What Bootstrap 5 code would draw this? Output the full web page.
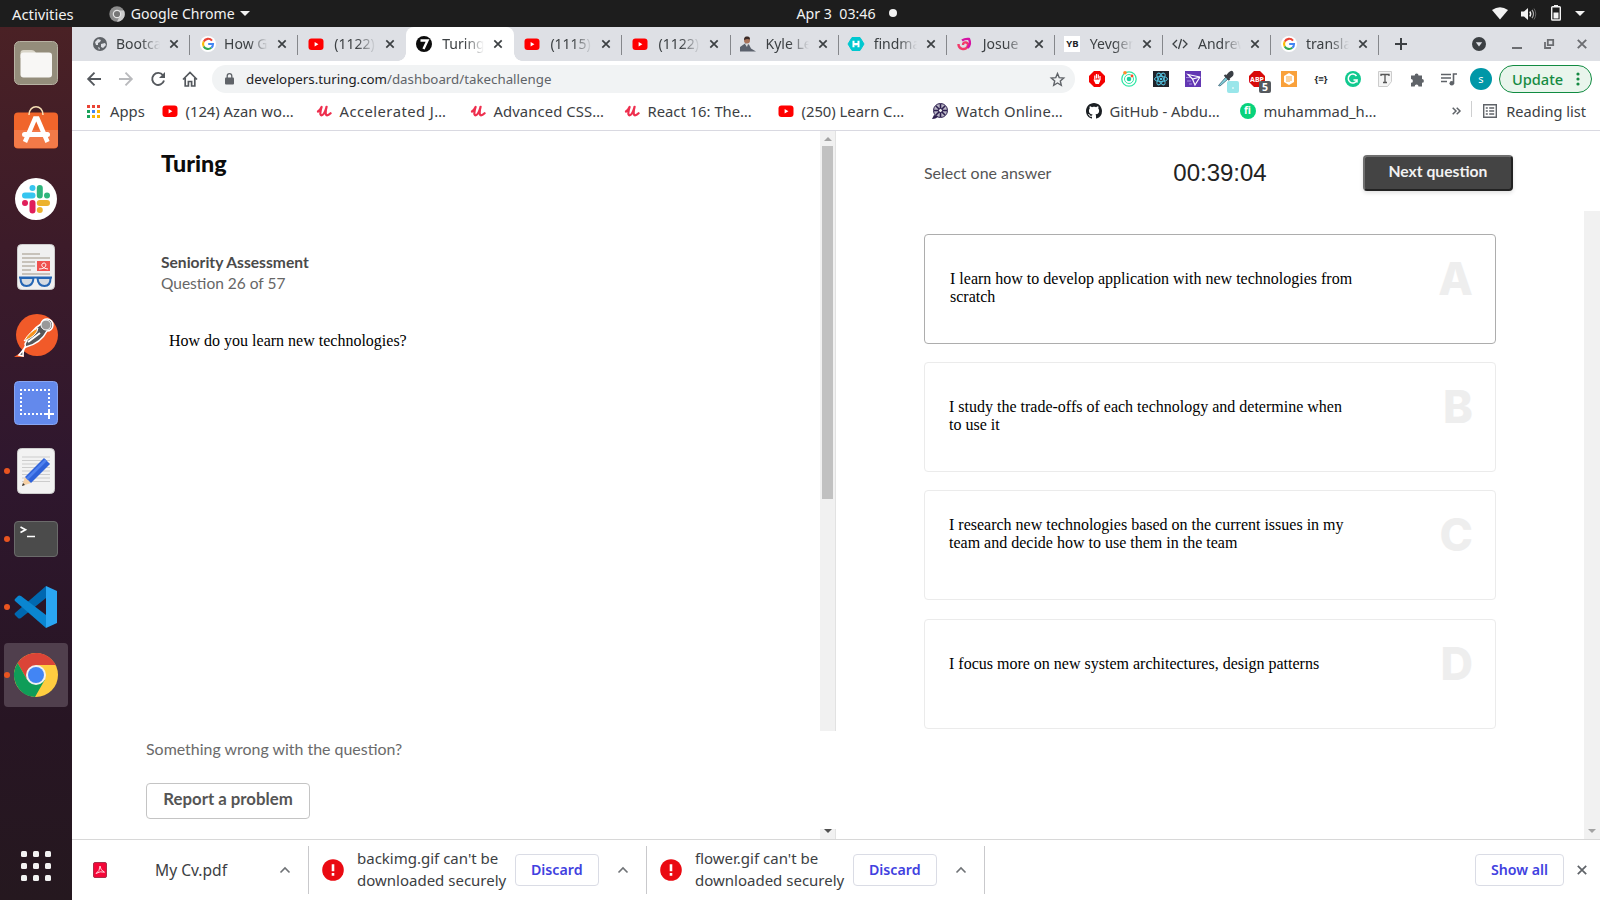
<!DOCTYPE html>
<html lang="en">
<head>
<meta charset="utf-8">
<title>Turing</title>
<link href="https://cdn.jsdelivr.net/npm/bootstrap@5.3.0/dist/css/bootstrap.min.css" rel="stylesheet">
<style>
  body { height: 900px; overflow: hidden; font-family: "Noto Sans", "Open Sans", sans-serif; font-size: 14.8px; line-height: 20px; color: #3c4043; background: #fff; }
  svg { display: block; flex: none; overflow: visible; }
  .sysbar { height: 27px; background: #1d1d1d; color: #f2f2f2; line-height: 26px; }
  .sysbar .side { flex: 1 1 0; }
  .dock { width: 72px; background: linear-gradient(#4a2125 0, #3c1b29 25%, #2f172e 50%, #271523 80%, #25181f 100%); padding-top: 2px; }
  .dock-item { height: 68px; position: relative; margin-bottom: 0; }
  .dock-item.running::before { content: ""; position: absolute; left: 4px; top: 31px; width: 6px; height: 6px; border-radius: 50%; background: #e95420; z-index: 1; }
  .dock-item.current > span { position: absolute; inset: 2px 4px; border-radius: 4px; background: #503f4d; }
  .dock-item svg { position: relative; }
  .tabstrip { height: 34px; background: #dee0e5; padding-left: 10px; }
  .tab-cell { width: 108.1px; height: 34px; padding-left: 9.5px; padding-bottom: 1px; position: relative; }
  .tab-cell.sep::after { content: ""; position: absolute; right: 0; top: 8px; height: 20px; width: 1px; background: #85878b; }
  .tab-cell .fav { width: 16px; margin-right: 8.5px; }
  .tab-title { width: 45px; overflow: hidden; white-space: nowrap; font-size: 14px; -webkit-mask-image: linear-gradient(90deg, #000 55%, transparent 98%); mask-image: linear-gradient(90deg, #000 55%, transparent 98%); }
  .tab-title.inset { padding-left: 2px; }
  .tab-cell .x { margin-left: 8px; }
  .tab-cell.live { background: #fff; border-radius: 8px 8px 0 0; }
  .tab-cell.live::before, .tab-cell.live i { content: ""; position: absolute; bottom: 0; width: 8px; height: 8px; }
  .tab-cell.live::before { left: -8px; background: radial-gradient(circle at 0 0, transparent 7.5px, #fff 8px); }
  .tab-cell.live i { right: -8px; background: radial-gradient(circle at 100% 0, transparent 7.5px, #fff 8px); }
  .toolbar { height: 36px; padding-left: 6px; }
  .slot { width: 32px; height: 28px; flex: none; }
  .omnibox { width: 863px; height: 28px; border-radius: 14px; background: #f1f3f4; margin-left: 6px; padding: 0 10px 0 13px; font-size: 13.3px; color: #5f6368; }
  .omnibox b { font-weight: 400; color: #202124; }
  .avatar { width: 22px; height: 22px; border-radius: 50%; background: #0097a7; color: #fff; font-size: 11px; line-height: 21px; }
  .update { width: 93px; height: 28px; border: 1px solid #118b41; border-radius: 14px; background: #e9f5ec; color: #158a42; font-weight: 500; font-size: 14.6px; padding: 0 11px 1px 12px; }
  .bookmarks { height: 34px; border-bottom: 1px solid #d9d9e1; padding: 0 14px 5px 15px; }
  .bm { width: 154px; white-space: nowrap; }
  .bm svg, .bm .ico { margin-right: 8px; }
  .page { height: 708px; }
  .geo { font-family: Lato, sans-serif; }
  .serif { font-family: "Liberation Serif", serif; font-size: 16px; line-height: 18px; color: #000; }
  .left-pane { width: 748px; }
  .sb { width: 16px; background: #f1f1f1; border-right: 1px solid #e2e2e2; }
  .sb-main { height: 600px; }
  .sb-thumb { width: 11px; height: 353px; background: #c1c1c1; }
  .brand { font-family: Lato, sans-serif; font-weight: 900; font-size: 23.3px; line-height: 28px; color: #0c0c0c; padding: 18px 0 0 89px; }
  .meta { padding: 75px 0 0 89px; font-size: 15.5px; line-height: 21px; color: #666; }
  .meta strong { font-weight: 700; color: #4a4a4a; font-size: 15.6px; }
  .report { width: 164px; height: 36px; border: 1px solid #c4c4c4; border-radius: 4px; font-weight: 700; font-size: 16.8px; line-height: 29px; color: #555; }
  .answers-head { height: 80px; padding: 24px 87px 0 88px; }
  .timer { font: 24px/36px "Liberation Sans", sans-serif; color: #222; }
  .next { width: 150px; height: 36px; border: 2px solid; border-color: #6f6f6f #222 #222 #6f6f6f; border-radius: 4px; background: #444; color: #f2f2f2; font-weight: 700; font-size: 15.7px; line-height: 29px; box-shadow: 0 2px 4px rgba(0,0,0,.12); }
  .answers { padding: 23px 0 0 88px; width: 748px; }
  .answer { width: 572px; height: 110px; border: 1px solid #ebebeb; border-radius: 4px; margin-bottom: 18px; padding: 0 22px 0 24px; }
  .answer:nth-child(3) { margin-bottom: 19px; }
  .answer.chosen { border-color: #adadad; padding-left: 25px; }
  .answer p { width: 403px; margin: 0; }
  .answer .key { font: 800 45px/54px Inter, sans-serif; color: #eee; margin-top: 17px; }
  .shelf { height: 60px; border-top: 1px solid #d8d8d8; font-size: 15px; line-height: 22px; }
  .dl { height: 48px; border-right: 1px solid #c9c9cc; }
  .dl-text { margin: 0 0 2px 13px; white-space: nowrap; }
  .shelf-btn { height: 32px; border: 1px solid #dadce5; border-radius: 4px; color: #4141e0; font-weight: 600; font-size: 14.2px; line-height: 29px; text-align: center; }
</style>
</head>
<body class="d-flex flex-column">

<svg width="0" height="0" class="position-absolute">
  <symbol id="yt" viewBox="0 0 16 16"><rect x=".5" y="2.5" width="15" height="11.5" rx="3" fill="#f00"/><path d="M6.600 6v4.600l3.800-2.300z" fill="#fff"/></symbol>
  <symbol id="goog" viewBox="0 0 16 16"><circle cx="8" cy="8" r="8" fill="#fff"/><g fill="none" stroke-width="2.100"><path d="M12 4.600A5 5 0 0 0 3.700 5.600" stroke="#ea4335"/><path d="M3.700 5.600a5 5 0 0 0 0 4.800" stroke="#fbbc05"/><path d="M3.700 10.400a5 5 0 0 0 7.600 1.400" stroke="#34a853"/><path d="M11.300 11.800A5 5 0 0 0 13 8H8.200" stroke="#4285f4"/></g></symbol>
  <symbol id="x" viewBox="0 0 10 10"><path d="M1.300 1.300l7.400 7.400M8.700 1.300L1.300 8.700" stroke="#3c4043" stroke-width="1.700"/></symbol>
  <symbol id="udemy" viewBox="0 0 16 16"><path d="M2 8.500C4 7 5 5.500 5.600 4 4.500 7.500 3.500 12.300 5.500 12.300 7.700 12.300 9.400 8 10.600 3.800 9.600 7.500 9 12.300 11 12.300 12.500 12.300 13.500 11.300 14.600 10.200" fill="none" stroke="#ee2f4e" stroke-width="2.200" stroke-linecap="round" stroke-linejoin="round"/></symbol>
  <symbol id="up" viewBox="0 0 12 8"><path d="M1.500 6.500L6 2l4.500 4.500" fill="none" stroke="#6f7276" stroke-width="1.600"/></symbol>
  <symbol id="warn" viewBox="0 0 22 22"><circle cx="11" cy="11" r="10.800" fill="#ea0a12"/><path d="M11 5.300v7M11 14v2.800" stroke="#fff" stroke-width="2.600"/></symbol>
</svg>

<header class="sysbar d-flex">
  <div class="side d-flex align-items-center ps-2 ms-1">
    <span>Activities</span>
    <svg style="margin-left:35px" width="16" height="16" viewBox="0 0 16 16"><circle cx="8" cy="8" r="7.700" fill="#8d8d8d"/><path d="M8 4.600H15A7.700 7.700 0 0 1 8 15.700L11 9.500" fill="#ccc"/><circle cx="8" cy="8" r="3.700" fill="#777" stroke="#e6e6e6" stroke-width="1.200"/></svg>
    <span style="font-size:14.100px;margin-left:6px">Google Chrome</span>
    <svg style="margin-left:5px" width="10" height="5"><path d="M0 0h10L5 5z" fill="#f2f2f2"/></svg>
  </div>
  <div class="d-flex align-items-center" style="font-size:14.200px"><span style="white-space:pre;margin-left:101px">Apr 3  03:46</span><svg width="9" height="9" class="me-1" style="margin-left:13px"><circle cx="4" cy="4" r="4" fill="#f2f2f2"/></svg></div>
  <div class="side d-flex align-items-center justify-content-end" style="padding-right:15px">
    <svg width="16" height="13" viewBox="0 0 16 13"><path d="M0 3Q8-2.500 16 3L8 12.500z" fill="#f2f2f2"/></svg>
    <svg style="margin-left:13px" width="16" height="14" viewBox="0 0 16 14"><path d="M0 4.500h3L7 1v12L3 9.500H0z" fill="#f2f2f2"/><path d="M8.800 4.500q1.800 2.500 0 5" stroke="#f2f2f2" fill="none" stroke-width="1.400"/><path d="M11 2.800q3 4.200 0 8.400" stroke="#aaa" fill="none" stroke-width="1.200"/><path d="M13 1.500q3.500 5.500 0 11" stroke="#666" fill="none"/></svg>
    <svg style="margin-left:14px;margin-bottom:1px" width="10" height="16" viewBox="0 0 10 16"><path d="M3 0h4v2H3z" fill="#f2f2f2"/><rect x=".7" y="1.700" width="8.600" height="13.300" rx=".8" fill="none" stroke="#f2f2f2" stroke-width="1.400"/><path d="M2.500 7.500h5v6h-5z" fill="#f2f2f2"/></svg>
    <svg style="margin-left:14px" width="10" height="5"><path d="M0 0h10L5 5z" fill="#f2f2f2"/></svg>
  </div>
</header>

<div class="d-flex flex-grow-1">
  <nav class="dock d-flex flex-column flex-shrink-0">
    <div class="dock-item d-flex align-items-center justify-content-center"><svg width="44" height="44"><rect x=".5" y=".5" width="43" height="43" rx="5" fill="#948d7b" stroke="#b8b2a3"/><path d="M6.500 12q0-3 3-3h8q3 0 4.500 3v5H6.500z" fill="#d9d5c8"/><rect x="6.500" y="11.500" width="31.500" height="25" rx="3" fill="#f8f7f5"/></svg></div>
    <div class="dock-item d-flex align-items-center justify-content-center pb-2"><svg width="44" height="44"><rect y="7.500" width="44" height="36" rx="4" fill="#f0652b"/><path d="M0 25h44v14q0 4-4 4H4q-4 0-4-4z" fill="#f37a48"/><path d="M15 10c0-11 14-11 14 0" fill="none" stroke="#f7dfb5" stroke-width="1.600"/><path d="M11 37L21 13.500h2.500L33.500 37" stroke="#fff" stroke-width="4.500" fill="none"/><path d="M10.500 29.500h23" stroke="#fff" stroke-width="5" stroke-linecap="round"/></svg></div>
    <div class="dock-item d-flex align-items-center justify-content-center"><svg width="42" height="42" viewBox="0 0 42 42"><circle cx="21" cy="21" r="21" fill="#fff"/><g stroke-width="6" stroke-linecap="round"><path d="M17.500 17.500h-7.500M17.500 10v.01" stroke="#36c5f0"/><path d="M24.800 10v7.500M32 17.500h.01" stroke="#2eb67d"/><path d="M24.800 25h7.200M24.800 32v.01" stroke="#ecb22e"/><path d="M17.500 25v7.500M10 25h.01" stroke="#e01e5a"/></g></svg></div>
    <div class="dock-item d-flex align-items-center justify-content-center"><svg width="38" height="46"><rect x=".5" y=".5" width="37" height="45" rx="4" fill="#f0f0f0" stroke="#ccc"/><path d="M5 10h18M5 14h28M5 18h13M5 22h13M5 26h9M5 30h28" stroke="#b9b3a8" stroke-width="1.700"/><path d="M20 17h13v10H20z" fill="#f0524f"/><path d="M22 25c8 0 8-6 5-6s-4 5 4 6" fill="none" stroke="#fff"/><path d="M3.500 34q0 8 6 8 6.500 0 7-8zM20.500 34q.5 8 7 8 6 0 6-8z" fill="#d5dbe2" stroke="#2566b4" stroke-width="2"/><path d="M2 33.500h33" stroke="#2566b4" stroke-width="2"/></svg></div>
    <div class="dock-item d-flex align-items-center justify-content-center"><svg width="44" height="44"><circle cx="23" cy="22" r="21" fill="#f15a29"/><path d="M0 44l9-6 1 6z" fill="#f15a29"/><path d="M5 42q8-9 6-11 6-14 16-20a6 6 0 1 1 6 7Q27 30 12 34q-3 1-3 9z" fill="#55585a" stroke="#fff" stroke-width="1.600"/><path d="M10 28q6-10 14-13-1 8-14 13z" fill="#f7941d" stroke="#fff"/><circle cx="32" cy="12" r="5" fill="#999" stroke="#fff"/><path d="M14 29l12-9" stroke="#fff" stroke-width="2"/></svg></div>
    <div class="dock-item d-flex align-items-center justify-content-center"><svg width="44" height="44"><rect x=".5" y=".5" width="43" height="43" rx="4" fill="#6389ec" stroke="#88a5f2"/><path d="M6 9h30M7 12v22M35 12v17M6 33h24" stroke="#fff" stroke-width="2" stroke-dasharray="2 2"/><path d="M35 28v10M30 33h10" stroke="#fff" stroke-width="2"/></svg></div>
    <div class="dock-item running d-flex align-items-center justify-content-center"><svg width="38" height="46"><rect x=".5" y=".5" width="37" height="45" rx="4" fill="#f2f2f2" stroke="#ccc"/><path d="M5 9h28M5 12.500h28M5 16h28M5 19.500h28M5 23h28M5 26.500h28M5 30h28M5 33.500h28" stroke="#ccc"/><path d="M5 38l3-9 6 6z" fill="#f5d0a5"/><path d="M8 29L27 10l6 6-19 19z" fill="#2f62d9"/><path d="M10 31L29 12" stroke="#4e80ee" stroke-width="2.500"/><path d="M5 38l1-3 2 2z" fill="#333"/></svg></div>
    <div class="dock-item running d-flex align-items-center justify-content-center"><svg width="44" height="36"><rect x=".5" y=".5" width="43" height="35" rx="3.500" fill="#4b4b4b" stroke="#6b6b6b"/><path d="M6.500 6l5 2.700-5 2.700M13 15.500h8" fill="none" stroke="#fff" stroke-width="1.700"/></svg></div>
    <div class="dock-item running d-flex align-items-center justify-content-center"><svg width="42" height="42" viewBox="0 0 42 42"><path d="M31 0L0 27q-1 1 0 2l3 3q1 1 3 0L31 12z" fill="#0068b0"/><path d="M31 42L0 15q-1-1 0-2l3-3q1-1 3 0l25 19z" fill="#0a86d1"/><path d="M31 0l11 5v32l-11 5z" fill="#2aa6f2"/></svg></div>
    <div class="dock-item running current d-flex align-items-center justify-content-center"><span></span><svg width="44" height="44" viewBox="0 0 44 44"><circle cx="22" cy="22" r="22" fill="#ffcd40"/><path d="M22 22V12h19.600A22 22 0 0 0 3.600 10L13.300 27z" fill="#db4437"/><path d="M3.600 10A22 22 0 0 0 21 44l9.700-17L22 22 13.300 27z" fill="#0f9d58"/><circle cx="22" cy="22" r="10" fill="#f1f1f1"/><circle cx="22" cy="22" r="8" fill="#4285f4"/></svg></div>
    <div class="mt-auto d-flex justify-content-center" style="padding-bottom:19px"><svg width="30" height="30"><g fill="#f2f2f2"><rect width="6" height="6" rx="1.500"/><rect x="12" width="6" height="6" rx="1.500"/><rect x="24" width="6" height="6" rx="1.500"/><rect y="12" width="6" height="6" rx="1.500"/><rect x="12" y="12" width="6" height="6" rx="1.500"/><rect x="24" y="12" width="6" height="6" rx="1.500"/><rect y="24" width="6" height="6" rx="1.500"/><rect x="12" y="24" width="6" height="6" rx="1.500"/><rect x="24" y="24" width="6" height="6" rx="1.500"/></g></svg></div>
  </nav>

  <main class="flex-grow-1 d-flex flex-column">
    <div class="tabstrip d-flex">
      <div class="tab-cell sep d-flex align-items-center"><div class="fav"><svg width="16" height="16"><circle cx="8" cy="8" r="7" fill="#5f6368"/><path d="M3 6l3-3 3 1-1 2-2 1v2H4zM9 8l4-1 1 2-3 3-2-1zM6 11l2 1-1 2z" fill="#dee0e5"/></svg></div><div class="tab-title">Bootca</div><svg class="x" width="10" height="10"><use href="#x"/></svg></div>
      <div class="tab-cell sep d-flex align-items-center"><div class="fav"><svg width="16" height="16"><use href="#goog"/></svg></div><div class="tab-title">How G</div><svg class="x" width="10" height="10"><use href="#x"/></svg></div>
      <div class="tab-cell d-flex align-items-center"><div class="fav"><svg width="16" height="16"><use href="#yt"/></svg></div><div class="tab-title inset">(1122)</div><svg class="x" width="10" height="10"><use href="#x"/></svg></div>
      <div class="tab-cell live d-flex align-items-center"><i></i><div class="fav"><svg width="16" height="16"><circle cx="8" cy="8" r="8" fill="#0c0c0c"/><path d="M4.500 4.500h7L7.500 13" fill="none" stroke="#fff" stroke-width="2.400"/></svg></div><div class="tab-title inset">Turing</div><svg class="x" width="10" height="10"><use href="#x"/></svg></div>
      <div class="tab-cell sep d-flex align-items-center"><div class="fav"><svg width="16" height="16"><use href="#yt"/></svg></div><div class="tab-title inset">(1115)</div><svg class="x" width="10" height="10"><use href="#x"/></svg></div>
      <div class="tab-cell sep d-flex align-items-center"><div class="fav"><svg width="16" height="16"><use href="#yt"/></svg></div><div class="tab-title inset">(1122)</div><svg class="x" width="10" height="10"><use href="#x"/></svg></div>
      <div class="tab-cell sep d-flex align-items-center"><div class="fav"><svg width="16" height="16"><circle cx="7" cy="4.500" r="3" fill="#a8735a"/><path d="M4 4q0-4 3-3.500 3-.5 3 3L7 3z" fill="#3a2a26"/><path d="M0 15.500V11l5-3.500 4 1 2 4 5 3z" fill="#5b616c"/><path d="M5 8l3 0-1 3z" fill="#ddd"/></svg></div><div class="tab-title" style="padding-left:1px">Kyle Le</div><svg class="x" width="10" height="10"><use href="#x"/></svg></div>
      <div class="tab-cell sep d-flex align-items-center"><div class="fav"><svg width="16" height="16"><path d="M4 1.500h8L16 8l-4 6.500H4L0 8z" fill="#00c8d0" stroke="#00c8d0" stroke-linejoin="round"/><path d="M5.500 4.800v6.400M10.500 4.800v6.400M5.500 6.500L8 8.500l2.500-2" fill="none" stroke="#fff" stroke-width="2"/></svg></div><div class="tab-title" style="padding-left:1px">findma</div><svg class="x" width="10" height="10"><use href="#x"/></svg></div>
      <div class="tab-cell sep d-flex align-items-center"><div class="fav"><svg width="16" height="16"><path d="M2.500 8a4.800 4.800 0 0 0 9 2.500Q13 7 10 6.500T7 9" fill="none" stroke="#f23a6a" stroke-width="2.400"/><path d="M6 4.500q3-2 7-1.500 2.500 5-1.500 9" fill="none" stroke="#d414a4" stroke-width="2.400"/></svg></div><div class="tab-title inset">Josue</div><svg class="x" width="10" height="10"><use href="#x"/></svg></div>
      <div class="tab-cell sep d-flex align-items-center"><div class="fav bg-white text-center fw-bold text-dark" style="font-size:9.500px;line-height:16px;height:16px">YB</div><div class="tab-title" style="padding-left:1px">Yevgen</div><svg class="x" width="10" height="10"><use href="#x"/></svg></div>
      <div class="tab-cell sep d-flex align-items-center"><div class="fav"><svg width="16" height="16"><path d="M5 4L1 8l4 4M11 4l4 4-4 4M9.500 3l-3 10" fill="none" stroke="#3c4043" stroke-width="1.300"/></svg></div><div class="tab-title" style="padding-left:1px">Andrew</div><svg class="x" width="10" height="10"><use href="#x"/></svg></div>
      <div class="tab-cell sep d-flex align-items-center"><div class="fav"><svg width="16" height="16"><use href="#goog"/></svg></div><div class="tab-title" style="padding-left:1px">transla</div><svg class="x" width="10" height="10"><use href="#x"/></svg></div>
      <div class="flex-grow-1 d-flex align-items-center justify-content-between" style="padding:0 13px 0 15.500px">
        <svg width="12" height="12"><path d="M6 0v12M0 6h12" stroke="#3c4043" stroke-width="2"/></svg>
        <div class="d-flex align-items-center">
          <svg width="14" height="14"><circle cx="7" cy="7" r="7" fill="#3c4043"/><path d="M3.800 5.200h6.400L7 9.400z" fill="#dee0e5"/></svg>
          <svg style="margin-left:26px" width="10" height="10"><path d="M0 9h10" stroke="#6b6d71" stroke-width="2"/></svg>
          <svg style="margin-left:22px" width="10" height="10"><path d="M3.800.8h5.400v5.400H3.800zM1 3v6h6" fill="none" stroke="#6b6d71" stroke-width="1.800"/></svg>
          <svg style="margin-left:23px" width="10" height="10"><path d="M.8.800l8.400 8.400M9.200.8L.8 9.200" stroke="#6b6d71" stroke-width="1.900"/></svg>
        </div>
      </div>
    </div>

    <div class="toolbar d-flex align-items-center">
      <div class="slot d-flex align-items-center justify-content-center"><svg width="14" height="14"><path d="M14 7H1M7.500.7L1.200 7l6.300 6.300" fill="none" stroke="#54585d" stroke-width="1.900"/></svg></div>
      <div class="slot d-flex align-items-center justify-content-center"><svg width="14" height="14"><path d="M0 7h13M6.500.7L12.800 7l-6.300 6.300" fill="none" stroke="#b9babd" stroke-width="1.900"/></svg></div>
      <div class="slot d-flex align-items-center justify-content-center"><svg width="14" height="14"><path d="M12 3.300A6 6 0 1 0 13 8.500" fill="none" stroke="#54585d" stroke-width="1.900"/><path d="M14 0v6H8z" fill="#54585d"/></svg></div>
      <div class="slot d-flex align-items-center justify-content-center"><svg width="16" height="16"><path d="M1 8.500L8 1.400l7 7.100M3.200 7v8h3.200v-4.500h3.200V15h3.200V7" fill="none" stroke="#54585d" stroke-width="1.700"/></svg></div>
      <div class="omnibox d-flex align-items-center">
        <svg width="10" height="12"><rect y="4.500" width="9" height="7" rx="1" fill="#5f6368"/><path d="M2.200 5V3a2.300 2.300 0 0 1 4.600 0v2" fill="none" stroke="#5f6368" stroke-width="1.300"/></svg>
        <span style="margin:0 0 1px 11px"><b>developers.turing.com</b>/dashboard/takechallenge</span>
        <svg class="ms-auto" width="15" height="15" viewBox="0 0 15 15"><path d="M7.500 1.500l1.700 4.100 4.500.4-3.400 2.900 1 4.400-3.800-2.300-3.800 2.300 1-4.400L1.300 6l4.500-.4z" fill="none" stroke="#5f6368" stroke-width="1.400"/></svg>
      </div>
      <div class="d-flex" style="margin-left:6px">
        <div class="slot d-flex align-items-center justify-content-center"><svg width="16" height="16"><path d="M5 0h6l5 5v6l-5 5H5l-5-5V5z" fill="#f40000"/><path d="M5.800 8V4.500M7.500 7.500V3M9.300 7.500V3.500M11 9V5M5 8.500l2 4h2.500l1.500-4" stroke="#fff" stroke-width="1.200" fill="#fff"/></svg></div>
        <div class="slot d-flex align-items-center justify-content-center"><svg width="16" height="16"><circle cx="8" cy="8" r="7.200" fill="none" stroke="#2fe6a5" stroke-width="1.300"/><circle cx="8" cy="8" r="4.500" fill="none" stroke="#2fe6a5"/><circle cx="8" cy="8" r="2.300" fill="#19cf9a"/><circle cx="4" cy="1.800" r="1.800" fill="#ff8b2b"/><circle cx="11" cy="5" r="1.400" fill="#ff4b2b"/></svg></div>
        <div class="slot d-flex align-items-center justify-content-center"><svg width="16" height="16"><path d="M0 0h16v16H0z" fill="#20232a"/><g fill="none" stroke="#53c1de"><ellipse cx="8" cy="8" rx="6.500" ry="2.600"/><ellipse cx="8" cy="8" rx="6.500" ry="2.600" transform="rotate(60 8 8)"/><ellipse cx="8" cy="8" rx="6.500" ry="2.600" transform="rotate(120 8 8)"/></g><circle cx="8" cy="8" r="1.300" fill="#53c1de"/></svg></div>
        <div class="slot d-flex align-items-center justify-content-center"><svg width="16" height="16"><path d="M0 0h16v16H0z" fill="#6338b3"/><path d="M3 3.500l12 2.500-7.500 2zM7.500 8l2.500 6L15 6" fill="none" stroke="#fff" stroke-width="1.200"/><path d="M1 6.500h4M2 10h4M4 13h3" stroke="#a78be0"/></svg></div>
        <div class="slot d-flex align-items-center justify-content-center position-relative"><svg width="16" height="16"><path d="M1.500 14.500L9 6l2 2-8 7z" fill="#7fd5e0" stroke="#54798a"/><path d="M7.500 4l5 5M9 6l3.500-4Q15-.5 15.500 2T13 6l-2 2" stroke="#3b3f45" stroke-width="2" fill="#3b3f45"/></svg><svg class="position-absolute" style="left:18px;top:16px" width="12" height="12"><rect width="12" height="12" rx="2" fill="#99e6ea"/><path d="M5 7h2" stroke="#fff"/></svg></div>
        <div class="slot d-flex align-items-center justify-content-center position-relative"><svg width="16" height="16"><path d="M5 0h6l5 5v6l-5 5H5l-5-5V5z" fill="#d80a0a"/><text x="8" y="11" text-anchor="middle" font-size="7" font-weight="700" fill="#fff">ABP</text></svg><svg class="position-absolute" style="left:18px;top:16px" width="12" height="12"><rect width="12" height="12" rx="2" fill="#55595e"/><text x="6" y="10" text-anchor="middle" font-size="10.500" font-weight="700" fill="#fff">5</text></svg></div>
        <div class="slot d-flex align-items-center justify-content-center"><svg width="16" height="16"><path d="M0 0h16v16H0z" fill="#f9a13b"/><path d="M8 2l5 3v6l-5 3-5-3V5z" fill="#fff"/><path d="M6 5v6M8 5v6M10 5v5" stroke="#f9b560" stroke-width="1.200"/></svg></div>
        <div class="slot d-flex align-items-center justify-content-center fw-bold text-dark" style="font-size:9.500px">{≡}</div>
        <div class="slot d-flex align-items-center justify-content-center"><svg width="16" height="16"><circle cx="8" cy="8" r="8" fill="#11c98f"/><path d="M11.500 5A4.500 4.500 0 1 0 12 9H8.500M12 9v2.500" fill="none" stroke="#fff" stroke-width="1.500"/></svg></div>
        <div class="slot d-flex align-items-center justify-content-center"><svg width="14" height="16"><path d="M.5.5h13v10l-4 5h-9z" fill="#f4f4f4" stroke="#ccc"/><path d="M3 5V3.500h8V5M7 3.500v8M5 11.500h4" fill="none" stroke="#555" stroke-width="1.300"/></svg></div>
        <div class="slot d-flex align-items-center justify-content-center"><svg width="15" height="15"><path d="M1 3.500h3.700a1.900 1.900 0 1 1 3.800 0H12V7a1.900 1.900 0 1 1 0 3.800V14.500H8.500a1.900 1.900 0 1 0-3.800 0H1v-3.700a1.900 1.900 0 1 0 0-3.800z" fill="#5f6368"/></svg></div>
        <div class="slot d-flex align-items-center justify-content-center"><svg width="16" height="13"><path d="M0 1.500h10M0 5h10M0 8.500h6M12.500 10.500V1H16" fill="none" stroke="#5f6368" stroke-width="1.600"/><circle cx="10.800" cy="10.300" r="2.300" fill="#5f6368"/></svg></div>
      </div>
      <div class="avatar text-center" style="margin-left:5px">s</div>
      <div class="update d-flex align-items-center justify-content-between" style="margin-left:7px"><span>Update</span><svg width="4" height="14"><g fill="#158a42"><circle cx="2" cy="2" r="1.600"/><circle cx="2" cy="7" r="1.600"/><circle cx="2" cy="12" r="1.600"/></g></svg></div>
    </div>

    <div class="bookmarks d-flex align-items-center">
      <div class="d-flex align-items-center" style="width:74.500px"><svg width="13" height="13" style="margin-right:10px"><path d="M0 0h3v3H0zM5 0h3v3H5zM10 0h3v3h-3z" fill="#ea4335"/><path d="M0 5h3v3H0zM0 10h3v3H0z" fill="#19a35a"/><path d="M5 5h3v3H5z" fill="#4285f4"/><path d="M10 5h3v3h-3zM5 10h3v3H5zM10 10h3v3h-3z" fill="#fbb405"/></svg>Apps</div>
      <div class="bm d-flex align-items-center"><svg width="16" height="16"><use href="#yt"/></svg>(124) Azan wo…</div>
      <div class="bm d-flex align-items-center" style="letter-spacing:.45px"><svg width="16" height="16"><use href="#udemy"/></svg>Accelerated J…</div>
      <div class="bm d-flex align-items-center" style="letter-spacing:.1px"><svg width="16" height="16"><use href="#udemy"/></svg>Advanced CSS…</div>
      <div class="bm d-flex align-items-center"><svg width="16" height="16"><use href="#udemy"/></svg>React 16: The…</div>
      <div class="bm d-flex align-items-center"><svg width="16" height="16"><use href="#yt"/></svg>(250) Learn C…</div>
      <div class="bm d-flex align-items-center" style="letter-spacing:.2px"><svg width="16" height="16"><circle cx="8.500" cy="7.500" r="7" fill="#b9b6c6" stroke="#2d1f4f"/><path d="M8.500 1v13M2 7.500h13M4 3l9 9M13 3l-9 9" stroke="#2d1f4f" stroke-width="1.600"/><circle cx="8.500" cy="7.500" r="2" fill="#eee" stroke="#2d1f4f"/><path d="M0 16q5 0 6-3l-4-1z" fill="#2d1f4f"/></svg>Watch Online…</div>
      <div class="bm d-flex align-items-center"><svg width="16" height="16" viewBox="0 0 16 16"><path d="M8 0C3.580 0 0 3.580 0 8c0 3.540 2.290 6.530 5.470 7.590.4.070.55-.17.55-.38 0-.19-.01-.82-.01-1.490-2.010.37-2.530-.49-2.690-.94-.09-.23-.48-.94-.82-1.130-.28-.15-.68-.52-.01-.53.63-.01 1.080.58 1.230.82.72 1.210 1.870.87 2.330.66.07-.52.28-.87.51-1.070-1.780-.2-3.640-.89-3.640-3.950 0-.87.31-1.590.82-2.150-.08-.2-.36-1.020.08-2.120 0 0 .67-.21 2.200.82.64-.18 1.320-.27 2-.27s1.360.09 2 .27c1.530-1.040 2.200-.82 2.200-.82.44 1.100.16 1.920.08 2.120.51.56.82 1.270.82 2.150 0 3.070-1.870 3.750-3.650 3.950.29.25.54.73.54 1.480 0 1.070-.01 1.930-.01 2.200 0 .21.15.46.55.38A8.010 8.010 0 0 0 16 8c0-4.420-3.580-8-8-8z" fill="#1b1f23"/></svg>GitHub - Abdu…</div>
      <div class="bm d-flex align-items-center"><div class="ico rounded-circle text-white fw-bold text-center" style="width:16px;height:16px;background:#08d27b;font-size:10px;line-height:15px">fi</div>muhammad_h…</div>
      <div class="ms-auto d-flex align-items-center"><svg width="9" height="8"><path d="M.7.700L4 4 .7 7.300M4.700.7L8 4 4.700 7.300" fill="none" stroke="#5f6368" stroke-width="1.500"/></svg><span class="vr" style="height:16px;margin:0 11px 0 10px"></span><svg width="14" height="14"><path d="M.7.700h12.600v12.600H.7zM2.800 4h2M6.200 4h5M2.800 7h2M6.200 7h5M2.800 10h2M6.200 10h5" fill="none" stroke="#5f6368" stroke-width="1.400"/></svg><span style="margin-left:9px;font-size:14.600px">Reading list</span></div>
    </div>

    <div class="page d-flex">
      <section class="left-pane d-flex flex-column">
        <div class="brand">Turing</div>
        <div class="meta geo"><strong>Seniority Assessment</strong><br>Question 26 of 57</div>
        <div class="serif" style="padding:38px 0 0 97px">How do you learn new technologies?</div>
        <div class="geo mt-auto" style="padding:0 0 20px 74px;font-size:15.950px;color:#6a6a6a">Something wrong with the question?<div class="report text-center" style="margin-top:24px">Report a problem</div></div>
      </section>
      <div class="d-flex flex-column">
        <div class="sb sb-main d-flex flex-column align-items-center"><svg width="8" height="4" style="margin:6px 0 5px"><path d="M0 4h8L4 0z" fill="#a3a3a3"/></svg><div class="sb-thumb"></div></div>
        <div class="sb mt-auto d-flex justify-content-center" style="height:10px"><svg width="8" height="4"><path d="M0 0h8L4 4z" fill="#505050"/></svg></div>
      </div>
      <section class="flex-grow-1 d-flex flex-column">
        <div class="answers-head d-flex justify-content-between">
          <span class="geo" style="width:127px;font-size:15.950px;line-height:36px;color:#555;white-space:nowrap">Select one answer</span>
          <span class="timer" style="margin-left:26px">00:39:04</span>
          <div class="next geo text-center">Next question</div>
        </div>
        <div class="d-flex flex-grow-1">
          <div class="answers">
            <div class="answer chosen serif d-flex justify-content-between"><p style="padding-top:35px">I learn how to develop application with new technologies from scratch</p><span class="key">A</span></div>
            <div class="answer serif d-flex justify-content-between"><p style="padding-top:35px">I study the trade-offs of each technology and determine when to use it</p><span class="key">B</span></div>
            <div class="answer serif d-flex justify-content-between"><p style="padding-top:25px">I research new technologies based on the current issues in my team and decide how to use them in the team</p><span class="key">C</span></div>
            <div class="answer serif d-flex justify-content-between"><p style="padding-top:35px">I focus more on new system architectures, design patterns</p><span class="key">D</span></div>
          </div>
          <div class="sb border-0 d-flex justify-content-center align-items-end" style="padding-bottom:6px"><svg width="8" height="4"><path d="M0 0h8L4 4z" fill="#a3a3a3"/></svg></div>
        </div>
      </section>
    </div>

    <footer class="shelf d-flex align-items-center">
      <div class="dl d-flex align-items-center" style="width:237px;padding-left:21px">
        <svg width="14" height="16"><rect x=".5" y=".5" width="13" height="15" rx="1.500" fill="#f40638" stroke="#a8304a"/><path d="M3 11.500Q7 9 7 4q0 4 4.500 6.200Q7 8.800 3 11.500z" fill="none" stroke="#fff" stroke-width=".8"/></svg>
        <span style="margin-left:48px;font-size:15.600px">My Cv.pdf</span><svg class="ms-auto" style="margin-right:17px" width="12" height="8"><use href="#up"/></svg>
      </div>
      <div class="dl d-flex align-items-center" style="width:338px;padding-left:13px"><svg width="22" height="22"><use href="#warn"/></svg><span class="dl-text">backimg.gif can't be<br>downloaded securely</span><span class="shelf-btn" style="width:84px;margin-left:8.500px">Discard</span><svg style="margin-left:18px" width="12" height="8"><use href="#up"/></svg></div>
      <div class="dl d-flex align-items-center" style="width:338px;padding-left:13px"><svg width="22" height="22"><use href="#warn"/></svg><span class="dl-text">flower.gif can't be<br>downloaded securely</span><span class="shelf-btn" style="width:84px;margin-left:8.500px">Discard</span><svg style="margin-left:18px" width="12" height="8"><use href="#up"/></svg></div>
      <span class="shelf-btn ms-auto" style="width:89px">Show all</span>
      <svg style="margin:0 13px" width="10" height="10"><path d="M.8.800l8.400 8.400M9.200.8L.8 9.200" stroke="#5f6368" stroke-width="1.700"/></svg>
    </footer>
  </main>
</div>
<script src="https://cdn.jsdelivr.net/npm/bootstrap@5.3.0/dist/js/bootstrap.bundle.min.js"></script>
</body>
</html>
